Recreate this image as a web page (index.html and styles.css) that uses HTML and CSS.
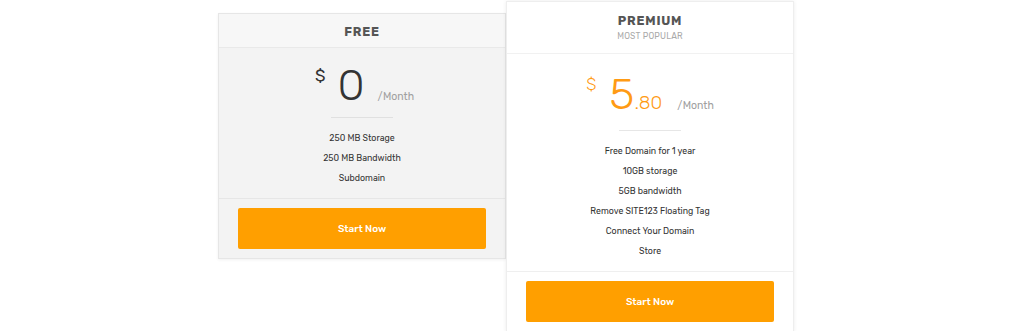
FILE: index.html
```html
<!DOCTYPE html>
<html>
<head>
<meta charset="utf-8">
<link rel="stylesheet" href="styles.css">
</head>
<body>
<div class="plans">
  <div class="card card-free">
    <div class="card-head">
      <div class="plan-name">FREE</div>
    </div>
    <div class="card-body">
      <div class="price">
        <span class="currency">$</span>
        <span class="amount">0</span>
        <span class="period">/Month</span>
      </div>
      <div class="divider"></div>
      <ul class="features">
        <li>250 MB Storage</li>
        <li>250 MB Bandwidth</li>
        <li>Subdomain</li>
      </ul>
    </div>
    <div class="card-foot">
      <a class="btn">Start Now</a>
    </div>
  </div>
  <div class="card card-premium">
    <div class="card-head">
      <div class="plan-name">PREMIUM</div>
      <div class="plan-tag">MOST POPULAR</div>
    </div>
    <div class="card-body">
      <div class="price">
        <span class="currency">$</span>
        <span class="amount">5<span class="cents">.80</span></span>
        <span class="period">/Month</span>
      </div>
      <div class="divider"></div>
      <ul class="features">
        <li>Free Domain for 1 year</li>
        <li>10GB storage</li>
        <li>5GB bandwidth</li>
        <li>Remove SITE123 Floating Tag</li>
        <li>Connect Your Domain</li>
        <li>Store</li>
      </ul>
    </div>
    <div class="card-foot">
      <a class="btn">Start Now</a>
    </div>
  </div>
</div>
</body>
</html>
```

FILE: styles.css
```css
* { box-sizing: border-box; }
html, body { margin: 0; padding: 0; background: #fff; }
body {
  font-family: "Rubik", Roboto, "Open Sans", sans-serif;
  color: #333;
}
.plans {
  display: flex;
  align-items: flex-start;
  padding-left: 218px;
  padding-top: 1px;
}
.card {
  width: 288px;
  text-align: center;
}
.card-free {
  margin-top: 12px;
  background: #f3f3f3;
  border: 1px solid #e6e6e6;
  box-shadow: 0 1px 3px rgba(0,0,0,0.06);
}
.card-premium {
  width: 288px;
  background: #fff;
  border: 1px solid #eeeeee;
  box-shadow: 0 0 4px rgba(0,0,0,0.08);
  position: relative;
  z-index: 2;
}
.card-head {
  display: flex;
  flex-direction: column;
  align-items: center;
  justify-content: center;
  border-bottom: 1px solid #e9e9e9;
}
.card-free .card-head {
  height: 34px;
  background: #f7f7f7;
  padding-top: 1px;
}
.card-premium .card-head {
  height: 52px;
  background: #fff;
  border-bottom-color: #f1f1f1;
  padding-bottom: 1px;
}
.plan-name {
  font-size: 12.5px;
  font-weight: 700;
  letter-spacing: 0.8px;
  color: #555;
  line-height: 15px;
}
.plan-tag {
  font-size: 8.5px;
  color: #aaa;
  line-height: 12px;
  margin-top: 2px;
  letter-spacing: 0.2px;
}
.price {
  display: flex;
  justify-content: center;
  align-items: flex-start;
  color: #333;
}
.card-free .price { padding-top: 13px; height: 69px; }
.card-premium .price { padding-top: 16px; height: 76px; color: #ff9b14; }
.currency {
  font-size: 17px;
  line-height: 20px;
  margin-top: 4px;
  margin-right: 13px;
  font-weight: 300;
}
.card-free .currency { margin-right: 12px; margin-left: 5px; font-weight: 400; }
.card-free .period { margin-left: 13px; }
.amount {
  font-size: 44px;
  font-weight: 300;
  line-height: 48px;
}
.cents {
  font-size: 19px;
}
.period {
  font-size: 10.5px;
  color: #a0a0a0;
  margin-left: 15px;
  margin-top: 29px;
  line-height: 14px;
}
.divider {
  width: 62px;
  height: 1px;
  background: #e0e0e0;
  margin: 0 auto;
}
.card-premium .divider { background: #e6e6e6; }
.features {
  list-style: none;
  margin: 0;
  padding: 10px 0 10px;
}
.features li {
  font-size: 8.8px;
  line-height: 20px;
  color: #333;
}
.card-foot {
  border-top: 1px solid #e6e6e6;
  padding: 9px 19px 9px;
}
.card-premium .card-foot { border-top-color: #efefef; }
.btn {
  display: flex;
  align-items: center;
  justify-content: center;
  height: 41px;
  background: #ff9f00;
  color: #fff;
  font-size: 10px;
  font-weight: 500;
  border-radius: 2px;
}
```
